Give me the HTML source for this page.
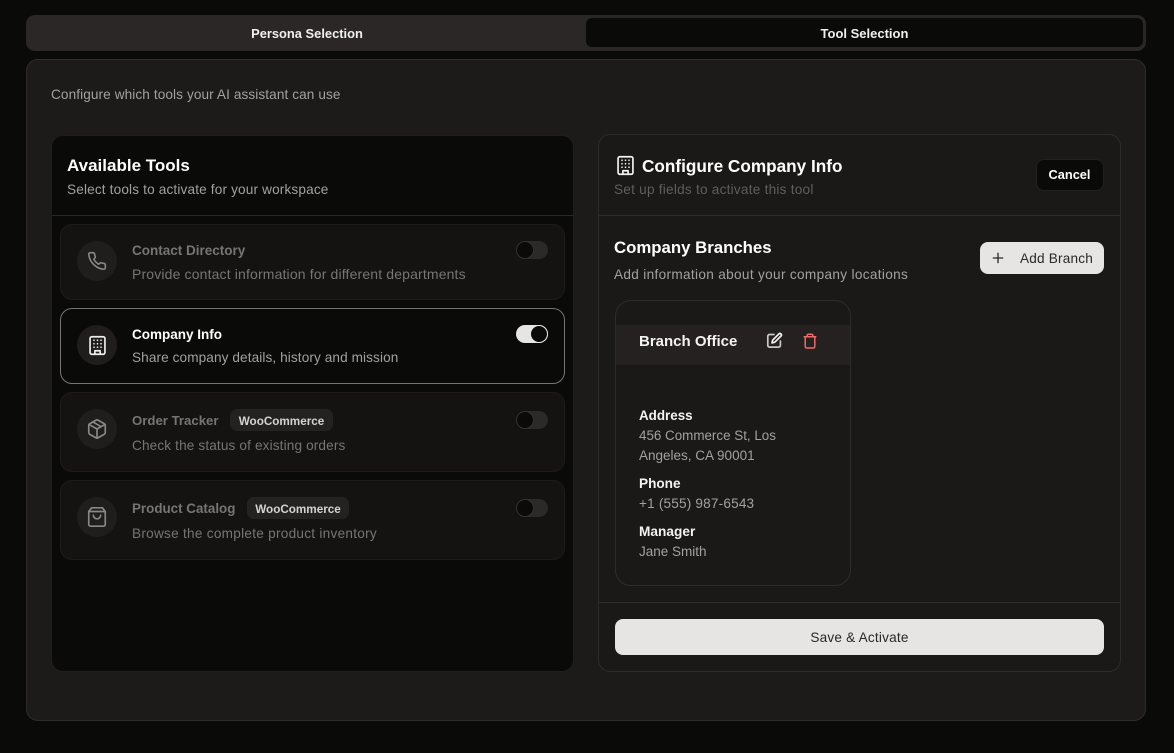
<!DOCTYPE html>
<html lang="en">
<head>
<meta charset="utf-8">
<title>Tool Selection</title>
<style>
*{box-sizing:border-box;margin:0;padding:0}
html,body{width:1174px;height:753px;background:#0a0a09;overflow:hidden;font-family:"Liberation Sans",sans-serif}
.a{position:absolute}
.t{position:absolute;white-space:nowrap;line-height:20px}
svg{position:absolute;fill:none;stroke-linecap:round;stroke-linejoin:round}
.card{position:absolute;left:60px;width:505px;border-radius:12px;background:#141312;border:1px solid #1d1c1b}
.ic{position:absolute;left:77px;width:40px;height:40px;border-radius:50%;background:#201e1d}
.tg{position:absolute;left:516px;width:32px;height:18px;border-radius:9px;background:#2c2a29}
.tg i{position:absolute;left:0;top:0;width:18px;height:18px;border-radius:50%;background:#0a0a09;border:1px solid #33312f}
.badge{position:absolute;height:22px;border-radius:7px;background:#242221;color:#d4d3d0;font-size:11.7px;font-weight:700;line-height:25px;text-align:center;white-space:nowrap}
</style>
</head>
<body>
<div class="a" style="left:26px;top:15px;width:1120px;height:36px;background:#2a2726;border-radius:9px"></div>
<div class="a" style="left:586px;top:18px;width:557px;height:29px;background:#0a0a09;border-radius:6px"></div>
<div class="t" style="left:27px;width:560px;top:24px;text-align:center;color:#f1f0ee;font-size:12.9px;font-weight:700">Persona Selection</div>
<div class="t" style="left:586px;width:557px;top:24px;text-align:center;color:#f1f0ee;font-size:13px;font-weight:700">Tool Selection</div>

<div class="a" style="left:26px;top:59px;width:1120px;height:662px;background:#1c1b1a;border:1px solid #2e2c2b;border-radius:12px"></div>
<div class="t" style="left:51px;top:85px;color:#a3a19e;font-size:13.6px;letter-spacing:.1px">Configure which tools your AI assistant can use</div>

<div class="a" style="left:51px;top:135px;width:523px;height:537px;background:#0a0a09;border:1px solid #1f1e1d;border-radius:12px"></div>
<div class="a" style="left:52px;top:215px;width:521px;height:1px;background:#2a2827"></div>
<div class="t" style="left:67px;top:156px;color:#fff;font-size:17px;font-weight:700">Available Tools</div>
<div class="t" style="left:67px;top:180px;color:#a3a19e;font-size:13.6px;letter-spacing:.16px">Select tools to activate for your workspace</div>

<div class="card" style="top:224px;height:76px"></div>
<div class="ic" style="top:241px"></div>
<svg style="left:87px;top:251px" width="20" height="20" viewBox="0 0 24 24" stroke="#8a8886" stroke-width="1.9"><path d="M22 16.9v3a2 2 0 0 1-2.2 2 19.8 19.8 0 0 1-8.6-3.1 19.5 19.5 0 0 1-6-6A19.8 19.8 0 0 1 2.1 4.2 2 2 0 0 1 4.1 2h3a2 2 0 0 1 2 1.7c.1 1 .4 1.9.7 2.8a2 2 0 0 1-.5 2.1L8.1 9.9a16 16 0 0 0 6 6l1.3-1.3a2 2 0 0 1 2.1-.4c.9.3 1.8.6 2.8.7a2 2 0 0 1 1.7 2z"/></svg>
<div class="t" style="left:132px;top:241px;color:#777573;font-size:13.5px;font-weight:700">Contact Directory</div>
<div class="t" style="left:132px;top:263.5px;color:#777573;font-size:14px;letter-spacing:.15px">Provide contact information for different departments</div>
<div class="tg" style="top:241px"><i></i></div>

<div class="card" style="top:308px;height:76px;background:#0a0a09;border-color:#787674"></div>
<div class="ic" style="top:325px"></div>
<svg style="left:86.5px;top:334.5px" width="21" height="21" viewBox="0 0 24 24" stroke="#eeedeb" stroke-width="1.9"><rect x="3.5" y="2" width="17" height="20" rx="2"/><path d="M9 22v-4h6v4M8 6h.01M12 6h.01M16 6h.01M8 10h.01M12 10h.01M16 10h.01M8 14h.01M12 14h.01M16 14h.01"/></svg>
<div class="t" style="left:132px;top:325px;color:#fff;font-size:13.5px;font-weight:700">Company Info</div>
<div class="t" style="left:132px;top:348px;color:#a3a19e;font-size:13.6px;letter-spacing:.1px">Share company details, history and mission</div>
<div class="tg" style="top:325px;background:#e6e5e3"><i style="left:14px;border-color:#e6e5e3"></i></div>

<div class="card" style="top:392px;height:80px"></div>
<div class="ic" style="top:409px"></div>
<svg style="left:86px;top:418px" width="22" height="22" viewBox="0 0 24 24" stroke="#8a8886" stroke-width="1.8"><path d="M21 8a2 2 0 0 0-1-1.7l-7-4a2 2 0 0 0-2 0l-7 4A2 2 0 0 0 3 8v8a2 2 0 0 0 1 1.7l7 4a2 2 0 0 0 2 0l7-4a2 2 0 0 0 1-1.7z"/><path d="M3.3 7 12 12l8.7-5M12 22V12M7.5 4.3l9 5.2"/></svg>
<div class="t" style="left:132px;top:411px;color:#777573;font-size:13.2px;font-weight:700">Order Tracker</div>
<div class="badge" style="left:230px;top:409px;width:103px">WooCommerce</div>
<div class="t" style="left:132px;top:436px;color:#777573;font-size:13.6px;letter-spacing:.14px">Check the status of existing orders</div>
<div class="tg" style="top:411px"><i></i></div>

<div class="card" style="top:480px;height:80px"></div>
<div class="ic" style="top:497px"></div>
<svg style="left:86px;top:506px" width="22" height="22" viewBox="0 0 24 24" stroke="#8a8886" stroke-width="1.8"><path d="M6 2h12l3 4v14a2 2 0 0 1-2 2H5a2 2 0 0 1-2-2V6z"/><path d="M3 6h18M16 10a4 4 0 0 1-8 0"/></svg>
<div class="t" style="left:132px;top:499px;color:#777573;font-size:13.4px;font-weight:700">Product Catalog</div>
<div class="badge" style="left:247px;top:497px;width:102px">WooCommerce</div>
<div class="t" style="left:132px;top:524px;color:#777573;font-size:13.6px;letter-spacing:.27px">Browse the complete product inventory</div>
<div class="tg" style="top:499px"><i></i></div>

<div class="a" style="left:598px;top:134px;width:523px;height:538px;background:#1a1918;border:1px solid #2e2c2b;border-radius:12px"></div>
<div class="a" style="left:599px;top:215px;width:521px;height:1px;background:#2e2c2b"></div>
<div class="a" style="left:599px;top:602px;width:521px;height:1px;background:#2e2c2b"></div>
<svg style="left:614.5px;top:155px" width="21" height="21" viewBox="0 0 24 24" stroke="#f4f3f1" stroke-width="1.9"><rect x="3.5" y="2" width="17" height="20" rx="2"/><path d="M9 22v-4h6v4M8 6h.01M12 6h.01M16 6h.01M8 10h.01M12 10h.01M16 10h.01M8 14h.01M12 14h.01M16 14h.01"/></svg>
<div class="t" style="left:642px;top:156px;color:#fff;font-size:17.2px;font-weight:700">Configure Company Info</div>
<div class="t" style="left:614px;top:180px;color:#5f5e5c;font-size:13.6px;letter-spacing:.24px">Set up fields to activate this tool</div>
<div class="a" style="left:1036px;top:159px;width:68px;height:32px;background:#0a0a09;border:1px solid #232120;border-radius:8px"></div>
<div class="t" style="left:1036px;width:67px;top:165px;text-align:center;color:#fff;font-size:12.8px;font-weight:700">Cancel</div>

<div class="t" style="left:614px;top:237.5px;color:#fff;font-size:16.8px;font-weight:700">Company Branches</div>
<div class="t" style="left:614px;top:265px;color:#a3a19e;font-size:13.6px;letter-spacing:.33px">Add information about your company locations</div>
<div class="a" style="left:980px;top:242px;width:124px;height:32px;background:#e6e5e3;border-radius:8px"></div>
<svg style="left:989.5px;top:250px" width="16" height="16" viewBox="0 0 24 24" stroke="#2a2827" stroke-width="2"><path d="M5 12h14M12 5v14"/></svg>
<div class="t" style="left:1020px;top:249px;color:#2a2827;font-size:13.6px;letter-spacing:.2px">Add Branch</div>

<div class="a" style="left:615px;top:300px;width:236px;height:286px;background:#1a1918;border:1px solid #2e2c2b;border-radius:16px"></div>
<div class="a" style="left:616px;top:325px;width:234px;height:40px;background:#242120"></div>
<div class="t" style="left:639px;top:332px;color:#f4f3f1;font-size:15px;font-weight:700">Branch Office</div>
<svg style="left:766px;top:332px" width="17" height="17" viewBox="0 0 17 17" stroke="#c9c8c6" stroke-width="1.7"><path d="M8 2.5H3.5a1.7 1.7 0 0 0-1.7 1.7v9.2a1.7 1.7 0 0 0 1.7 1.7h9.2a1.7 1.7 0 0 0 1.7-1.7V9"/><path stroke="#f4f3f1" d="M13 1.8a1.5 1.5 0 0 1 2.1 2.1L8.8 10.2l-2.8.7.7-2.8z"/></svg>
<svg style="left:802px;top:333px" width="16" height="16" viewBox="0 0 16 16" stroke="#ec6a6a" stroke-width="1.5"><path d="M2.2 3.8h11.6M12.8 3.8v9.7a1.5 1.5 0 0 1-1.5 1.5H4.7a1.5 1.5 0 0 1-1.5-1.5V3.8M5.2 3.8V2.4a1.2 1.2 0 0 1 1.2-1.2h3.2a1.2 1.2 0 0 1 1.2 1.2v1.4"/></svg>

<div class="t" style="left:639px;top:405.5px;color:#f4f3f1;font-size:13.4px;font-weight:700">Address</div>
<div class="t" style="left:639px;top:426px;color:#a3a19e;font-size:13.4px">456 Commerce St, Los</div>
<div class="t" style="left:639px;top:446px;color:#a3a19e;font-size:13.5px">Angeles, CA 90001</div>
<div class="t" style="left:639px;top:474px;color:#f4f3f1;font-size:13.6px;font-weight:700">Phone</div>
<div class="t" style="left:639px;top:494px;color:#a3a19e;font-size:13.6px;letter-spacing:.18px">+1 (555) 987-6543</div>
<div class="t" style="left:639px;top:522px;color:#f4f3f1;font-size:13.7px;font-weight:700">Manager</div>
<div class="t" style="left:639px;top:542px;color:#a3a19e;font-size:13.5px">Jane Smith</div>

<div class="a" style="left:615px;top:619px;width:489px;height:36px;background:#e6e5e3;border-radius:8px"></div>
<div class="t" style="left:615px;width:489px;top:628px;text-align:center;color:#2a2827;font-size:13.6px;letter-spacing:.2px">Save &amp; Activate</div>
</body>
</html>
